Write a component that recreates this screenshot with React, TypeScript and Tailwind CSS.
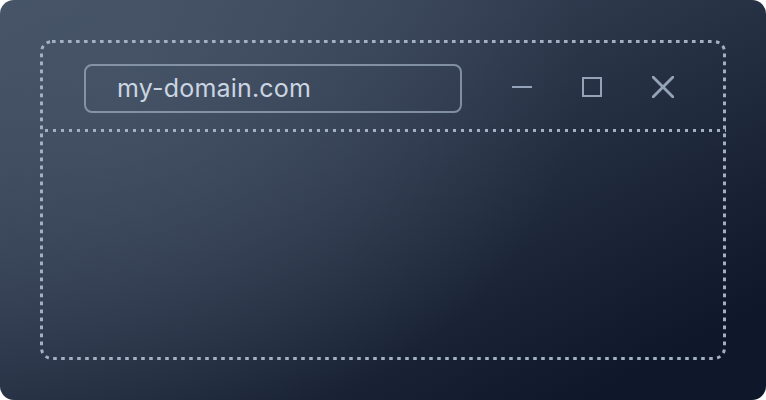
import React from "react";

export default function App() {
  return (
    <div className="w-[766px] h-[400px] bg-white">
      <div className="w-full h-full rounded-[14px] p-10 bg-[radial-gradient(ellipse_60%_90%_at_16%_18%,rgba(72,86,106,0.8)_0%,rgba(72,86,106,0)_100%),linear-gradient(to_bottom_right,#465367_0%,#0f172a_88%)] overflow-hidden">
        <div className="relative w-full h-full flex flex-col">
          <svg
            className="absolute inset-0 pointer-events-none"
            width="686"
            height="320"
            viewBox="0 0 686 320"
          >
            <rect
              x="1.5"
              y="1.5"
              width="683"
              height="317"
              rx="10.5"
              fill="none"
              stroke="#a3afc2"
              strokeWidth="3"
              strokeDasharray="3.6 4.4"
            />
          </svg>
          <div className="h-[89px] pt-2 pl-[44px] flex items-center">
            <div className="w-[378px] h-[49px] rounded-[8px] border-2 border-[#94a3b8]/80 pl-[31px] flex items-center">
              <span className="text-[25px] tracking-[0.2px] text-[#cbd5e1] font-['Inter','Liberation_Sans',sans-serif] leading-none pb-[1px]">
                my-domain.com
              </span>
            </div>
            <div className="ml-[50px] flex items-center gap-[50px] mb-[3px]">
              <svg width="20" height="20" viewBox="0 0 20 20">
                <line x1="0" y1="10" x2="20" y2="10" stroke="#94a3b8" strokeWidth="2" />
              </svg>
              <svg width="20" height="20" viewBox="0 0 20 20">
                <rect x="1" y="1" width="18" height="18" fill="none" stroke="#94a3b8" strokeWidth="2" />
              </svg>
              <svg width="22" height="22" viewBox="0 0 22 22" className="overflow-hidden">
                <line x1="0" y1="0" x2="22" y2="22" stroke="#94a3b8" strokeWidth="2.8" />
                <line x1="22" y1="0" x2="0" y2="22" stroke="#94a3b8" strokeWidth="2.8" />
              </svg>
            </div>
          </div>
          <div className="h-[3px] w-full bg-[repeating-linear-gradient(to_right,transparent_0_5px,#a3afc2_5px_8px)]" />
          <div className="flex-1" />
        </div>
      </div>
    </div>
  );
}
